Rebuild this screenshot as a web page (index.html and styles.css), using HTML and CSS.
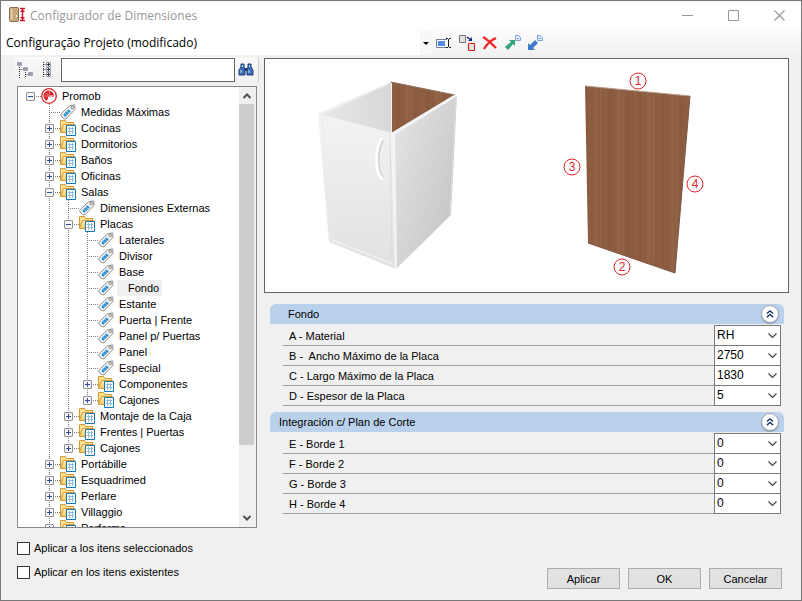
FILE: index.html
```
<!DOCTYPE html>
<html lang="es">
<head>
  <meta charset="UTF-8">
  <meta name="viewport" content="width=device-width, initial-scale=1.0">
  <title>Configurador de Dimensiones</title>
  <link rel="stylesheet" href="styles.css">
</head>
<body>
  <!-- Shared icons -->
  <svg class="sprite" aria-hidden="true">
    <defs>
      <linearGradient id="folderFill" x1="0" y1="0" x2="0" y2="1">
        <stop offset="0" stop-color="#fff0b4"/>
        <stop offset="1" stop-color="#f5c863"/>
      </linearGradient>
    </defs>
    <symbol id="folder" viewBox="0 0 16 16">
      <path d="M.5 12.500V.500h5l1 2h7V6" fill="#ffe08c" stroke="#d49a3a"/>
      <path d="M.5 12.500 3.500 4.500h11v4l-4 4z" fill="url(#folderFill)" stroke="#d49a3a"/>
      <path d="M6.500 5.500h9v10h-9z" fill="#fff" stroke="#1078b4"/>
      <path d="M8 8.500h6M8 11.500h6M9.500 7v7M12.500 7v7" stroke="#8fb9d8" fill="none"/>
    </symbol>
    <symbol id="tag" viewBox="0 0 16 16">
      <path d="M.8 10 9.500 1.800 14.600.8 15 5.400 6 14.800 4 14.800.8 11.800z" fill="#f1f1f1" stroke="#909294"/>
      <path d="M3.200 10.600 8.600 5.200l2.200 2.200-5.600 5.600z" fill="#2f93d2"/>
      <path d="m5 9 2 2M7 7l2 2" stroke="#7cc0ea" fill="none"/>
      <circle cx="12.300" cy="3.400" r="1.300" fill="#fff" stroke="#777"/>
    </symbol>
    <symbol id="up" viewBox="0 0 16 16">
      <path d="M4.500 10 8 6.500l3.500 3.500" fill="none" stroke="#505050" stroke-width="2"/>
    </symbol>
    <symbol id="collapse" viewBox="0 0 18 18">
      <path d="m5.500 8.500 3.500-3 3.500 3M5.500 12.500l3.500-3 3.500 3" fill="none" stroke="#1f3864" stroke-width="1.600"/>
    </symbol>
  </svg>

  <div class="window">
    <header class="titlebar">
      <svg class="app-icon" width="18" height="16" viewBox="0 0 18 16">
        <rect x=".5" y=".5" width="9" height="14" rx="1" fill="#c9a77c" stroke="#8a6a48"/>
        <path d="M2.500 2v11" stroke="#e3caa5" stroke-width="2"/>
        <path d="M7.500 8v2" stroke="#fff"/>
        <path d="M11 1.500h5M11 13.500h5M13.500 2v11" stroke="#d9142b" stroke-width="1.400"/>
        <path d="m11 5 2.500-3L16 5zM11 10l2.500 3L16 10z" fill="#d9142b"/>
      </svg>
      <h1>Configurador de Dimensiones</h1>
      <div class="window-buttons">
        <button type="button" aria-label="Minimizar"><svg width="11" height="11"><path d="M0 5.500h11" stroke="#999"/></svg></button>
        <button type="button" aria-label="Maximizar"><svg width="11" height="11"><path d="M.5.5h10v10h-10z" fill="none" stroke="#999"/></svg></button>
        <button type="button" aria-label="Cerrar"><svg width="11" height="11"><path d="m.5.5 10 10m0-10-10 10" stroke="#999" stroke-width="1.200"/></svg></button>
      </div>
    </header>

    <div class="project-bar">
      <select class="project" aria-label="Configuración">
        <option>Configuração Projeto (modificado)</option>
      </select>
      <div class="project-tools">
        <button type="button" aria-label="Renombrar">
          <svg width="16" height="16" viewBox="0 0 16 16">
            <path d="M11 4.500H.5v8H11" fill="#fff" stroke="#6f7f96"/>
            <path d="M2 6h7v5H2z" fill="#4f8be0"/>
            <path d="M10 3.500h2m1 0h2M12.500 4v8M10 12.500h2m1 0h2" fill="none" stroke="#222"/>
          </svg>
        </button>
        <button type="button" aria-label="Sustituir">
          <svg width="16" height="16" viewBox="0 0 16 16">
            <path d="M.5.5h6v7h-6z" fill="#e2e2e2" stroke="#7d7070"/>
            <path d="m8 2 4 3" stroke="#0b2a80" stroke-width="1.500"/>
            <path d="M13 2v4H9z" fill="#0b2a80"/>
            <path d="M9.500 8.500h6v7h-6z" fill="#e2e2e2" stroke="#f01010"/>
          </svg>
        </button>
        <button type="button" aria-label="Eliminar">
          <svg width="16" height="16" viewBox="0 0 16 16">
            <path d="M1 2c4 2 9 7 13 11M14 3C9 5 5 9 2 14" fill="none" stroke="#ee2828" stroke-width="2.400"/>
          </svg>
        </button>
        <button type="button" aria-label="Exportar">
          <svg width="16" height="16" viewBox="0 0 16 16">
            <path d="M4 5h6v6l-2-2-5 6-3-3 6-5z" fill="#2fa27c"/>
            <path d="M10.500.5h3l2 2v3h-5z" fill="#dceafa" stroke="#7ba3d6"/>
            <path d="M12 3.500h2" stroke="#7ba3d6"/>
          </svg>
        </button>
        <button type="button" aria-label="Importar">
          <svg width="16" height="16" viewBox="0 0 16 16">
            <path d="M0 15V8l2 2 5-5 3 3-5 5 2 2z" fill="#3d7cc9"/>
            <path d="M9.500.5h3l2 2v3h-5z" fill="#dceafa" stroke="#7ba3d6"/>
            <path d="M11 3.500h2" stroke="#7ba3d6"/>
          </svg>
        </button>
      </div>
    </div>

    <main class="content">
      <section class="sidebar">
        <div class="search-bar">
          <button type="button" aria-label="Contraer todo">
            <svg width="16" height="16" viewBox="0 0 16 16">
              <path d="M2.500 5v11M2.500 7.500h3M8.500 10v6M8.500 12.500h3" stroke="#333" stroke-dasharray="1 1" fill="none"/>
              <path d="M.5.5h4v3h-4zM6.500 5.500h4v3h-4zM11.500 10.500h4v3h-4z" fill="#f6f6ff" stroke="#9aa2b0"/>
              <path d="M1 2h3M7 7h3M12 12h3" stroke="#445"/>
            </svg>
          </button>
          <button type="button" aria-label="Expandir todo">
            <svg width="16" height="16" viewBox="0 0 16 16">
              <path d="M4.500 0v16M4.500 2.500H8M4.500 7.500H8M4.500 12.500H8" stroke="#333" stroke-dasharray="1 1" fill="none"/>
              <path d="M7.500.5h4v4h-4zM7.500 5.500h4v4h-4zM7.500 10.500h4v4h-4z" fill="#f6f6ff" stroke="#9aa2b0"/>
              <path d="M8 2.500h3M8 7.500h3M8 12.500h3M9.500 1v3M9.500 6v3M9.500 11v3" stroke="#334"/>
            </svg>
          </button>
          <input type="text" aria-label="Buscar">
          <button type="button" aria-label="Buscar">
            <svg width="16" height="16" viewBox="0 0 16 16">
              <path d="M3 2h3v3l1 2v6H1V8l2-3zM10 2h3v3l2 3v5H9V7l1-2z" fill="#3e6eb5" stroke="#1c3f80"/>
              <path d="M6.500 6h3v3h-3z" fill="#1c3f80"/>
              <path d="M3 8v3M11 8v3M4.500 3v2M11.500 3v2" stroke="#c9ddf5"/>
            </svg>
          </button>
        </div>

        <div class="tree-box">
          <ul class="tree">
            <li>
              <div class="node"><button type="button" class="toggle open" aria-label="Contraer"></button>
                <svg class="icon" viewBox="0 0 16 16">
                  <circle cx="8" cy="8" r="7.300" fill="#fff" stroke="#d9252c" stroke-width="1.300"/>
                  <path d="M7.500 2.500A5.300 5.300 0 0 0 3 10l2 3 2-2V8.500h6A5.500 5.500 0 0 0 7.500 2.500z" fill="#d9252c"/>
                  <path d="M8.500 3v4.500H13M4 8h4M5 5l2 2" stroke="#f3a5a8" stroke-width=".8" fill="none"/>
                </svg>
                <span>Promob</span></div>
              <ul>
                <li><div class="node leaf"><svg class="icon"><use href="#tag"/></svg><span>Medidas Máximas</span></div></li>
                <li><div class="node"><button type="button" class="toggle" aria-label="Expandir"></button><svg class="icon"><use href="#folder"/></svg><span>Cocinas</span></div></li>
                <li><div class="node"><button type="button" class="toggle" aria-label="Expandir"></button><svg class="icon"><use href="#folder"/></svg><span>Dormitorios</span></div></li>
                <li><div class="node"><button type="button" class="toggle" aria-label="Expandir"></button><svg class="icon"><use href="#folder"/></svg><span>Baños</span></div></li>
                <li><div class="node"><button type="button" class="toggle" aria-label="Expandir"></button><svg class="icon"><use href="#folder"/></svg><span>Oficinas</span></div></li>
                <li>
                  <div class="node"><button type="button" class="toggle open" aria-label="Contraer"></button><svg class="icon"><use href="#folder"/></svg><span>Salas</span></div>
                  <ul>
                    <li><div class="node leaf"><svg class="icon"><use href="#tag"/></svg><span>Dimensiones Externas</span></div></li>
                    <li>
                      <div class="node"><button type="button" class="toggle open" aria-label="Contraer"></button><svg class="icon"><use href="#folder"/></svg><span>Placas</span></div>
                      <ul>
                        <li><div class="node leaf"><svg class="icon"><use href="#tag"/></svg><span>Laterales</span></div></li>
                        <li><div class="node leaf"><svg class="icon"><use href="#tag"/></svg><span>Divisor</span></div></li>
                        <li><div class="node leaf"><svg class="icon"><use href="#tag"/></svg><span>Base</span></div></li>
                        <li><div class="node leaf"><svg class="icon"><use href="#tag"/></svg><span class="selected">Fondo</span></div></li>
                        <li><div class="node leaf"><svg class="icon"><use href="#tag"/></svg><span>Estante</span></div></li>
                        <li><div class="node leaf"><svg class="icon"><use href="#tag"/></svg><span>Puerta | Frente</span></div></li>
                        <li><div class="node leaf"><svg class="icon"><use href="#tag"/></svg><span>Panel p/ Puertas</span></div></li>
                        <li><div class="node leaf"><svg class="icon"><use href="#tag"/></svg><span>Panel</span></div></li>
                        <li><div class="node leaf"><svg class="icon"><use href="#tag"/></svg><span>Especial</span></div></li>
                        <li><div class="node"><button type="button" class="toggle" aria-label="Expandir"></button><svg class="icon"><use href="#folder"/></svg><span>Componentes</span></div></li>
                        <li><div class="node"><button type="button" class="toggle" aria-label="Expandir"></button><svg class="icon"><use href="#folder"/></svg><span>Cajones</span></div></li>
                      </ul>
                    </li>
                    <li><div class="node"><button type="button" class="toggle" aria-label="Expandir"></button><svg class="icon"><use href="#folder"/></svg><span>Montaje de la Caja</span></div></li>
                    <li><div class="node"><button type="button" class="toggle" aria-label="Expandir"></button><svg class="icon"><use href="#folder"/></svg><span>Frentes | Puertas</span></div></li>
                    <li><div class="node"><button type="button" class="toggle" aria-label="Expandir"></button><svg class="icon"><use href="#folder"/></svg><span>Cajones</span></div></li>
                  </ul>
                </li>
                <li><div class="node"><button type="button" class="toggle" aria-label="Expandir"></button><svg class="icon"><use href="#folder"/></svg><span>Portábille</span></div></li>
                <li><div class="node"><button type="button" class="toggle" aria-label="Expandir"></button><svg class="icon"><use href="#folder"/></svg><span>Esquadrimed</span></div></li>
                <li><div class="node"><button type="button" class="toggle" aria-label="Expandir"></button><svg class="icon"><use href="#folder"/></svg><span>Perlare</span></div></li>
                <li><div class="node"><button type="button" class="toggle" aria-label="Expandir"></button><svg class="icon"><use href="#folder"/></svg><span>Villaggio</span></div></li>
                <li><div class="node"><button type="button" class="toggle" aria-label="Expandir"></button><svg class="icon"><use href="#folder"/></svg><span>Performa</span></div></li>
              </ul>
            </li>
          </ul>
          <div class="scrollbar">
            <button type="button" aria-label="Subir"><svg width="16" height="16"><use href="#up"/></svg></button>
            <div class="track"><div class="thumb"></div></div>
            <button type="button" class="down" aria-label="Bajar"><svg width="16" height="16"><use href="#up"/></svg></button>
          </div>
        </div>

        <div class="options">
          <label><input type="checkbox">Aplicar a los itens seleccionados</label>
          <label><input type="checkbox">Aplicar en los itens existentes</label>
        </div>
      </section>

      <section class="details">
        <div class="preview">
          <svg viewBox="0 0 523 233" role="img" aria-label="Fondo">
            <defs>
              <linearGradient id="front" x1="0" y1="0" x2="0" y2="1">
                <stop offset="0" stop-color="#f3f3f3"/>
                <stop offset="1" stop-color="#e1e1e1"/>
              </linearGradient>
              <linearGradient id="side" x1="0" y1="0" x2="1" y2=".8">
                <stop offset="0" stop-color="#e6e6e6"/>
                <stop offset="1" stop-color="#c4c4c4"/>
              </linearGradient>
              <linearGradient id="inner" x1="0" y1="0" x2="1" y2="0">
                <stop offset="0" stop-color="#e8e8e8"/>
                <stop offset="1" stop-color="#d8d8d8"/>
              </linearGradient>
              <pattern id="wood" width="53" height="233" patternUnits="userSpaceOnUse">
                <rect width="53" height="233" fill="#8e5e43"/>
                <path d="M4 0v233M27 0v233M45 0v233" stroke="#8a5a3f" stroke-width="3"/>
                <path d="M13 0v233M36 0v233" stroke="#926347" stroke-width="4"/>
                <path d="M8.500 0v233M20.500 0v233M31.500 0v233M49.500 0v233" stroke="#8b5b40"/>
                <path d="M17.500 0v233M40.500 0v233" stroke="#956649"/>
              </pattern>
            </defs>

            <!-- Cabinet -->
            <path d="m53 55 73-32v51z" fill="url(#inner)"/>
            <path d="m126 23 64 13-64 39z" fill="url(#wood)"/>
            <path d="m126 23 64 13" stroke="#8c7263"/>
            <path d="M126.500 24v50" stroke="#f5f5f5"/>
            <path d="m53 55 74 19 4 136-67-27z" fill="url(#front)"/>
            <path d="m53 55 73-32v1L57 56z" fill="#efefef"/>
            <path d="m128 75 64-38-6 119-55 54z" fill="url(#side)"/>
            <path d="m126 74 63-38 3 1-61 38z" fill="#f4f4f4"/>
            <path d="m126 74 4 1 2 134-2 1z" fill="#f4f4f4"/>
            <path d="m125 75 2 130" stroke="#dcdcdc" fill="none"/>
            <path d="m191 37-6 119" stroke="#dedede" fill="none"/>
            <path d="m67 181 61 24" stroke="#f9f9f9"/>
            <path d="m57 57 9 123" stroke="#ebebeb"/>
            <path d="M118 81c-6 12-6 29 0 38" fill="none" stroke="#cfcfcf" stroke-width="2"/>
            <path d="M118 80h-2c-6 12-6 30 0 39h2" fill="none" stroke="#fdfdfd" stroke-width="3"/>

            <!-- Back panel with its edge numbers -->
            <path d="m320 27 105 10-15 177-87-30z" fill="url(#wood)"/>
            <path d="m320 27 105 10" stroke="#b49a88"/>
            <path d="m425 37-15 177-87-30" fill="none" stroke="#7b5744"/>
            <g class="marks">
              <circle cx="373" cy="22" r="8"/><text x="373" y="26">1</text>
              <circle cx="357" cy="208" r="8"/><text x="357" y="212">2</text>
              <circle cx="307" cy="108" r="8"/><text x="307" y="112">3</text>
              <circle cx="430" cy="125" r="8"/><text x="430" y="129">4</text>
            </g>
          </svg>
        </div>

        <div class="groups">
          <div class="group">
            <div class="group-header indented">
              <h2>Fondo</h2>
              <button type="button" aria-label="Contraer"><svg width="16" height="16"><use href="#collapse"/></svg></button>
            </div>
            <div class="fields">
              <div class="field"><label for="a">A - Material</label><select id="a"><option>RH</option></select></div>
              <div class="field"><label for="b">B -&nbsp; Ancho Máximo de la Placa</label><select id="b"><option>2750</option></select></div>
              <div class="field"><label for="c">C - Largo Máximo de la Placa</label><select id="c"><option>1830</option></select></div>
              <div class="field"><label for="d">D - Espesor de la Placa</label><select id="d"><option>5</option></select></div>
            </div>
          </div>
          <div class="group">
            <div class="group-header">
              <h2>Integración c/ Plan de Corte</h2>
              <button type="button" aria-label="Contraer"><svg width="16" height="16"><use href="#collapse"/></svg></button>
            </div>
            <div class="fields">
              <div class="field"><label for="e">E - Borde 1</label><select id="e"><option>0</option></select></div>
              <div class="field"><label for="f">F - Borde 2</label><select id="f"><option>0</option></select></div>
              <div class="field"><label for="g">G - Borde 3</label><select id="g"><option>0</option></select></div>
              <div class="field"><label for="h">H - Borde 4</label><select id="h"><option>0</option></select></div>
            </div>
          </div>
        </div>

        <div class="actions">
          <button type="button">Aplicar</button>
          <button type="button">OK</button>
          <button type="button">Cancelar</button>
        </div>
      </section>
    </main>
  </div>
</body>
</html>
```

FILE: styles.css
```
* {
  box-sizing: border-box;
}

body {
  margin: 0;
  font-family: "Liberation Sans", Arial, sans-serif;
  font-size: 11px;
  color: #000;
}

button,
input,
select {
  margin: 0;
  padding: 0;
  border: 0;
  border-radius: 0;
  background: none;
  font: inherit;
  color: inherit;
}

svg {
  display: block;
}

h1,
h2 {
  margin: 0;
  font-weight: normal;
}

.sprite {
  position: absolute;
  width: 0;
  height: 0;
}

.window {
  display: flex;
  flex-direction: column;
  height: 100vh;
  border: 1px solid #777;
  background: #f0f0f0;
}

/* Title bar */
.titlebar {
  display: flex;
  align-items: center;
  height: 28px;
  padding: 0 16px 0 8px;
  background: #fff;
}

.titlebar h1 {
  flex: 1;
  margin-left: 3px;
  font-family: "Open Sans", "Noto Sans", sans-serif;
  font-size: 12px;
  color: #999;
}

.window-buttons {
  display: flex;
  gap: 35px;
}

/* Project selector */
.project-bar {
  display: flex;
  align-items: center;
  height: 28px;
  padding-bottom: 1px;
  background: linear-gradient(#fdfdfd, #f0f0f0);
}

.project {
  flex: 0 1 431px;
  height: 24px;
  padding-left: 5px;
  appearance: none;
  background: #fff url("data:image/svg+xml,%3Csvg xmlns='http://www.w3.org/2000/svg' width='12' height='24'%3E%3Cpath d='M0 0h12v24H0z' fill='%23f7f7f7'/%3E%3Cpath d='M3 11h6l-3 3z'/%3E%3C/svg%3E") no-repeat right;
  font-family: "Open Sans", "Noto Sans", sans-serif;
  font-size: 12px;
}

.project-tools {
  display: flex;
  gap: 7px;
  margin-left: 4px;
}

/* Main area */
.content {
  display: grid;
  grid-template-columns: 245px 1fr;
  gap: 5px;
  flex: 1;
  min-height: 0;
  padding: 0 12px 11px 13px;
}

.sidebar,
.details {
  display: flex;
  flex-direction: column;
  min-width: 0;
  min-height: 0;
}

.search-bar {
  display: flex;
  align-items: center;
  height: 26px;
  padding: 0 4px 0 3px;
  border-right: 1px solid #ccc;
  border-radius: 3px;
  background: linear-gradient(#fafafa, #f0f0f0);
  gap: 6px;
}

.search-bar input {
  flex: 1;
  min-width: 0;
  height: 24px;
  margin-right: -3px;
  padding: 0 4px;
  border: 1px solid #646464;
  background: #fff;
}

/* Tree */
.tree-box {
  display: flex;
  flex: 1;
  min-height: 0;
  margin: 3px 2px 0 3px;
  border: 1px solid #828790;
  background: #fff;
}

.tree,
.tree ul {
  margin: 0;
  padding: 0;
  list-style: none;
}

.tree {
  flex: 1;
  padding: 1px 0 0 4px;
  overflow: hidden;
}

.tree ul {
  padding-left: 19px;
}

.tree ul > li {
  background: repeating-linear-gradient(#808080 0 1px, transparent 1px 2px) 8px 0 / 1px 100% no-repeat;
}

.tree ul ul > li:last-child {
  background-size: 1px 8px;
}

.node {
  display: flex;
  align-items: center;
  height: 16px;
  padding-left: 4px;
  background: repeating-linear-gradient(90deg, #808080 0 1px, transparent 1px 2px) 8px 8px / 12px 1px no-repeat;
  white-space: nowrap;
}

.node.leaf {
  padding-left: 19px;
}

.toggle {
  flex: none;
  width: 9px;
  height: 9px;
  margin-right: 6px;
  border: 1px solid #919191;
  border-radius: 1px;
  background:
    linear-gradient(#2b4f9e, #2b4f9e) center / 5px 1px no-repeat,
    linear-gradient(#2b4f9e, #2b4f9e) center / 1px 5px no-repeat,
    #f4f4f4;
}

.toggle.open {
  background:
    linear-gradient(#2b4f9e, #2b4f9e) center / 5px 1px no-repeat,
    #f4f4f4;
}

.icon {
  flex: none;
  width: 16px;
  height: 16px;
  margin-right: 3px;
}

.node span {
  padding: 0 2px;
  line-height: 16px;
}

.node .selected {
  padding: 0 3px 0 11px;
  background: #f0f0f0;
}

.scrollbar {
  display: flex;
  flex-direction: column;
  width: 17px;
  padding-right: 1px;
  background: #f0f0f0;
}

.scrollbar button {
  height: 17px;
}

.scrollbar .down {
  transform: rotate(180deg);
}

.track {
  flex: 1;
}

.thumb {
  width: 15px;
  height: 84%;
  background: #cdcdcd;
}

.options {
  display: flex;
  flex-direction: column;
  gap: 8px;
  padding: 12px 3px 9px;
}

.options label {
  display: flex;
  align-items: center;
  gap: 4px;
  height: 16px;
}

.options input {
  appearance: none;
  width: 13px;
  height: 13px;
  border: 1px solid #333;
  background: #fff;
}

/* Details */
.preview {
  margin-top: 1px;
  border: 1px solid #646464;
  background: #fff;
}

.marks circle {
  fill: #fff;
  stroke: #e0242a;
}

.marks text {
  fill: #e0242a;
  font-size: 12px;
  text-anchor: middle;
}

.groups {
  display: flex;
  flex-direction: column;
  gap: 6px;
  padding: 11px 5px 0 6px;
}

.group-header {
  display: flex;
  align-items: center;
  justify-content: space-between;
  height: 20px;
  padding: 0 5px 0 9px;
  border-radius: 6px 6px 0 0;
  background: #b9d1ea;
}

.group-header.indented {
  padding-left: 18px;
}

.group-header h2 {
  font-size: 11px;
}

.group-header button {
  border: 1px solid #a0a3ae;
  border-radius: 50%;
  background: #fff;
  box-shadow: 0 1px 1px #8c9cb4;
}

.fields {
  padding: 2px 3px 0 13px;
}

.field {
  display: flex;
  height: 20px;
  border-bottom: 1px solid #a0a0a0;
}

.field label {
  flex: 1;
  padding-left: 6px;
  line-height: 21px;
}

.field select {
  width: 67px;
  height: 21px;
  margin: -1px 0;
  padding: 0 0 1px 2px;
  appearance: none;
  border: 1px solid #7a7a7a;
  background: #fff url("data:image/svg+xml,%3Csvg xmlns='http://www.w3.org/2000/svg' width='9' height='6'%3E%3Cpath d='m.5.5 4 4 4-4' fill='none' stroke='%23444' stroke-width='1.2'/%3E%3C/svg%3E") no-repeat right 3px center;
  font-size: 12px;
}

.actions {
  display: flex;
  justify-content: flex-end;
  gap: 8px;
  margin-top: auto;
  padding-right: 7px;
}

.actions button {
  width: 73px;
  height: 21px;
  border: 1px solid #adadad;
  background: #e1e1e1;
}
```
